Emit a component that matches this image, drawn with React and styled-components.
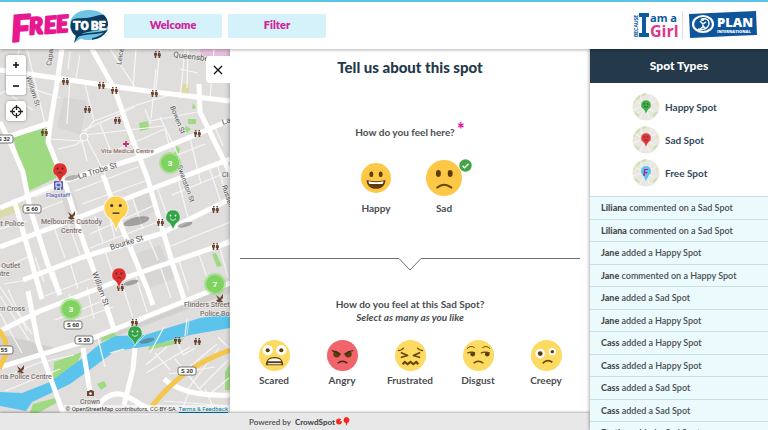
import { useState } from "react";
import styled, { createGlobalStyle } from "styled-components";

const feelings = ["Scared", "Angry", "Frustrated", "Disgust", "Creepy"];

const spotTypes = [
  { label: "Happy Spot", color: "#3fae49", mood: "happy" },
  { label: "Sad Spot", color: "#e0393b", mood: "sad" },
  { label: "Free Spot", color: "#5cc5ee", mood: "free" },
];

const activity = [
  ["Liliana", "commented on a Sad Spot"],
  ["Liliana", "commented on a Sad Spot"],
  ["Jane", "added a Happy Spot"],
  ["Jane", "commented on a Happy Spot"],
  ["Jane", "added a Sad Spot"],
  ["Jane", "added a Happy Spot"],
  ["Cass", "added a Happy Spot"],
  ["Cass", "added a Happy Spot"],
  ["Cass", "added a Sad Spot"],
  ["Cass", "added a Sad Spot"],
  ["Etutlea", "added a Sad Spot"],
];

export default function App() {
  const [mood, setMood] = useState("Sad");

  return (
    <>
      <GlobalStyle />
      <Page>
        <Header>
          <FreeToBeLogo />
          <Nav>
            <NavButton type="button">Welcome</NavButton>
            <NavButton type="button">Filter</NavButton>
          </Nav>
          <Partners>
            <GirlLogo />
            <PlanLogo />
          </Partners>
        </Header>
        <Body>
          <Main>
            <Workspace>
              <MapArea>
                <CityMap />
                <MapControls>
                  <ZoomGroup>
                    <MapButton type="button" aria-label="Zoom in">
                      <svg width="8" height="8" viewBox="0 0 8 8">
                        <path d="M4 1v6M1 4h6" stroke="#111" strokeWidth="1.6" />
                      </svg>
                    </MapButton>
                    <MapButton type="button" aria-label="Zoom out">
                      <svg width="8" height="8" viewBox="0 0 8 8">
                        <path d="M1 4h6" stroke="#111" strokeWidth="1.6" />
                      </svg>
                    </MapButton>
                  </ZoomGroup>
                  <ZoomGroup>
                    <MapButton type="button" aria-label="Find my location">
                      <svg width="13" height="13" viewBox="0 0 13 13" fill="none" stroke="#222" strokeWidth="1.3">
                        <circle cx="6.500" cy="6.500" r="4.300" />
                        <path d="M6.500 0v5M6.500 8v5M0 6.500h5M8 6.500h5" />
                      </svg>
                    </MapButton>
                  </ZoomGroup>
                </MapControls>
                <Attribution>
                  © OpenStreetMap contributors, CC-BY-SA. <a href="#terms">Terms &amp; Feedback</a>
                </Attribution>
              </MapArea>
              <Panel>
                <CloseButton type="button" aria-label="Close">
                  <svg width="10" height="10" viewBox="0 0 10 10">
                    <path d="M1 1l8 8M9 1l-8 8" stroke="#111" strokeWidth="1.3" />
                  </svg>
                </CloseButton>
                <Title>Tell us about this spot</Title>
                <MoodSet>
                  <Question>
                    How do you feel here? <Required>*</Required>
                  </Question>
                  <Options>
                    {["Happy", "Sad"].map((name) => (
                      <Option key={name}>
                        <HiddenInput
                          type="radio"
                          name="mood"
                          checked={mood === name}
                          onChange={() => setMood(name)}
                        />
                        <FaceBox $height={36}>
                          <Face name={name} size={mood === name ? 36 : 30} />
                          {mood === name && <Tick />}
                        </FaceBox>
                        <OptionLabel>{name}</OptionLabel>
                      </Option>
                    ))}
                  </Options>
                </MoodSet>
                <Divider>
                  <Line />
                  <svg width="22" height="13" viewBox="0 0 22 13" fill="none">
                    <path d="M0 .5L11 12 22 .5" stroke="#68707a" />
                  </svg>
                  <Line />
                </Divider>
                <FeelingSet>
                  <SubQuestion>How do you feel at this {mood} Spot?</SubQuestion>
                  <Hint>Select as many as you like</Hint>
                  <Options>
                    {feelings.map((name) => (
                      <Option key={name} $tight>
                        <HiddenInput type="checkbox" name="feeling" value={name} />
                        <FaceBox $height={31}>
                          <Face name={name} size={31} />
                        </FaceBox>
                        <OptionLabel>{name}</OptionLabel>
                      </Option>
                    ))}
                  </Options>
                </FeelingSet>
              </Panel>
            </Workspace>
            <Footer>
              Powered by <strong>CrowdSpot</strong>
              <svg width="14" height="9" viewBox="0 0 14 9" fill="#f5281e">
                <circle cx="3" cy="4.500" r="2.900" />
                <path d="M3 4.500L6 2v2z" fill="#fff" />
                <path d="M10.500 0a3 3 0 0 1 1 5.800l-1 3.200-1-3.200a3 3 0 0 1 1-5.800z" />
              </svg>
            </Footer>
          </Main>
          <Sidebar>
            <SidebarTitle>Spot Types</SidebarTitle>
            <Legend>
              {spotTypes.map((spot) => (
                <LegendItem key={spot.label}>
                  <SpotIcon {...spot} />
                  {spot.label}
                </LegendItem>
              ))}
            </Legend>
            <Activity>
              {activity.map(([name, action], i) => (
                <ActivityRow key={i}>
                  <b>{name}</b> {action}
                </ActivityRow>
              ))}
            </Activity>
          </Sidebar>
        </Body>
      </Page>
    </>
  );
}

function FreeToBeLogo() {
  return (
    <LogoSvg width="98" height="36" viewBox="0 0 98 36" role="img" aria-label="Free to be">
      <g fill="#e8178f" stroke="#e8178f" strokeWidth="2" strokeLinejoin="round" fontFamily="Lato, sans-serif" fontWeight="900" fontStyle="italic" transform="rotate(-4 10 20)">
        <text x="0" y="33" fontSize="36">F</text>
        <text x="18" y="27" fontSize="23">R</text>
        <text x="33" y="27" fontSize="23">E</text>
        <text x="45" y="27" fontSize="23">E</text>
      </g>
      <path d="M78 2c11 0 19 6 19 15s-8 15-19 15c-3 0-6-.5-8-1.500L63 35l2-7c-4-3-6-6-6-11C59 8 67 2 78 2z" fill="#6fc3e4" />
      <path d="M61 12c5-3 13-1 20-3 5-1 9-3 12-2 3 3 4 6 4 10-1 4-4 4-9 5-8 2-15 1-20 6l-5 7 2-7c-5-4-7-10-4-16z" fill="#0d3c5e" />
      <path d="M65 29c8-5 20-2 30-6-3 5-8 7-14 8" fill="none" stroke="#0d3c5e" strokeWidth="1.500" />
      <g fontFamily="Roboto, sans-serif" fontWeight="900" fontSize="12" fill="#fff" stroke="#fff" strokeWidth=".6">
        <text x="62" y="22">TO</text>
        <text x="80" y="22">BE</text>
      </g>
    </LogoSvg>
  );
}

function GirlLogo() {
  return (
    <LogoSvg width="46" height="28" viewBox="0 0 46 28" role="img" aria-label="Because I am a girl">
      <text transform="translate(5 26) rotate(-90)" fontFamily="Lato, sans-serif" fontWeight="900" fontSize="5" fill="#0d5a9e">BECAUSE</text>
      <path d="M6 2h10v4h-3v16h3v4H6v-4h3V6H6z" fill="#0d5a9e" />
      <g fontFamily="Open Sans, sans-serif" fontWeight="700">
        <text x="17" y="11" fontSize="11" fill="#0d5a9e">am a</text>
        <text x="17" y="26" fontSize="16" fill="#e0368c">Girl</text>
      </g>
    </LogoSvg>
  );
}

function PlanLogo() {
  return (
    <LogoSvg width="68" height="28" viewBox="0 0 68 28" role="img" aria-label="Plan International">
      <path d="M0 3l22-1L67 0l1 24-25 1-42 2z" fill="#0f559c" />
      <g fill="none" stroke="#fff">
        <ellipse cx="14" cy="13" rx="10" ry="8" strokeWidth="2.200" />
        <path d="M9 18c5 2 11-1 11-6 0-3-3-5-6-4" strokeWidth="1.400" />
        <path d="M11 10l3 3 3-2M14 12v4l-3 2M14 15l3 3" strokeWidth="1.500" />
      </g>
      <circle cx="13.500" cy="8.500" r="1.600" fill="#fff" />
      <text x="28" y="16" fontFamily="Open Sans, sans-serif" fontWeight="800" fontSize="13" fill="#fff">PLAN</text>
      <text x="28" y="22" fontFamily="Open Sans, sans-serif" fontWeight="800" fontSize="4" fill="#fff">INTERNATIONAL</text>
    </LogoSvg>
  );
}

function Tick() {
  return (
    <TickSvg width="13" height="13" viewBox="0 0 13 13">
      <circle cx="6.500" cy="6.500" r="6.200" fill="#43a547" />
      <path d="M3.500 6.700l2 2 4-4" fill="none" stroke="#fff" strokeWidth="1.500" />
    </TickSvg>
  );
}

const faceDetails = {
  Happy: (
    <>
      <ellipse cx="11" cy="12" rx="2" ry="3" />
      <ellipse cx="21" cy="12" rx="2" ry="3" />
      <path d="M6 18q10 3 20 0c0 6-4 9.500-10 9.500S6 24 6 18z" />
      <path d="M8 19.500q8 2 16 0c0 2-1 3-2 3H10c-1 0-2-1-2-3z" fill="#fff" />
    </>
  ),
  Sad: (
    <>
      <ellipse cx="11" cy="12" rx="2.200" ry="3.100" />
      <ellipse cx="21.500" cy="12" rx="2.200" ry="3.100" />
      <path d="M10 24.500q6-5 12.500 0" fill="none" stroke="#664500" strokeWidth="1.800" strokeLinecap="round" />
    </>
  ),
  Scared: (
    <>
      <circle cx="9" cy="10.500" r="5.300" fill="#fff" />
      <circle cx="23" cy="10.500" r="5.300" fill="#fff" />
      <circle cx="9" cy="10.500" r="2.100" />
      <circle cx="23" cy="10.500" r="2.100" />
      <path d="M7 26c0-5 3-8.500 9-8.500s9 3.500 9 8.500z" />
      <path d="M9 22c1-2 3-3.200 7-3.200s6 1.200 7 3.200z" fill="#fff" />
      <path d="M9 24.500h14" stroke="#fff" strokeWidth="1.200" />
    </>
  ),
  Angry: (
    <>
      <circle cx="10" cy="14.500" r="3.500" />
      <circle cx="22" cy="14.500" r="3.500" />
      <path d="M4 10q6 0 10 5l2-3 2 3q4-5 10-5l-3-3H7z" fill="#f1646b" />
      <path d="M5 11q6 1 9 4M27 11q-6 1-9 4M11 24q5-4 10 0" fill="none" stroke="#412a18" strokeWidth="1.500" />
    </>
  ),
  Frustrated: (
    <g fill="none" stroke="#664500" strokeWidth="1.700" strokeLinejoin="round">
      <path d="M3 11q4 0 6-3M29 11q-4 0-6-3" strokeWidth="1.200" />
      <path d="M6 13l7 3-7 2M26 13l-7 3 7 2" />
      <path d="M8 25l2-2.500 3 2.500 3-2.500 3 2.500 3-2.500 2 2.500" strokeWidth="2.200" />
    </g>
  ),
  Disgust: (
    <>
      <circle cx="10" cy="14.500" r="2.500" />
      <circle cx="25" cy="14.500" r="2.500" />
      <path d="M4 9q4-4 8-1M20 8q4-3 8 1" fill="none" stroke="#664500" strokeWidth="1" />
      <path d="M4.500 13.500q4-2 8 0M18.500 13.500q4-2 9 0M11 24q5-4 10 0" fill="none" stroke="#664500" strokeWidth="1.500" />
    </>
  ),
  Creepy: (
    <>
      <circle cx="9.500" cy="14" r="5" fill="#fff" />
      <circle cx="22" cy="12" r="3.800" fill="#fff" />
      <circle cx="9.500" cy="14" r="2.500" />
      <circle cx="22" cy="12" r="1.800" />
      <path d="M12 24q5-5 10-1" fill="none" stroke="#664500" strokeWidth="1.800" />
    </>
  ),
};

const mainMoods = ["Happy", "Sad"];

function Face({ name, size }) {
  const skin = name === "Angry" ? "#f1646b" : mainMoods.includes(name) ? "#fcc846" : "#fdda61";
  return (
    <svg width={size} height={size} viewBox="0 0 32 32" fill="#5d3c0b">
      <circle cx="16" cy="16" r="16" fill={skin} />
      {faceDetails[name]}
    </svg>
  );
}

function Pin({ x, y, r = 7, color, mood, ink = "#333", shadow = true }) {
  return (
    <g transform={`translate(${x} ${y})`}>
      {shadow && (
        <ellipse cx={r * 1.7} cy={r * 1.1} rx={r * 1.1} ry={r / 3} fill="#555" opacity=".45" transform={`rotate(-14 ${r * 1.7} ${r * 1.1})`} />
      )}
      <g transform={`scale(${r / 7})`}>
        <path d="M0-7a7 7 0 0 1 3.500 13.100C2 8 1 10 0 13-1 10-2 8-3.500 6.100A7 7 0 0 1 0-7z" fill={color} stroke="#fff" strokeWidth=".7" strokeOpacity=".7" />
        <circle cx="-2.500" cy="-1.500" r=".9" fill={ink} />
        <circle cx="2.500" cy="-1.500" r=".9" fill={ink} />
        <path d={{ happy: "M-3 1.500Q0 5 3 1.500", sad: "M-2.500 3.500Q0 1 2.500 3.500", flat: "M-2 3h4" }[mood]} fill="none" stroke={ink} strokeWidth=".8" />
      </g>
    </g>
  );
}

function SpotIcon({ color, mood }) {
  return (
    <svg width="28" height="28" viewBox="0 0 28 28">
      <circle cx="14" cy="14" r="13.500" fill="#e9e7e2" />
      <g stroke="#f7f6f3" fill="none">
        <path d="M3 8l22 12M8 3l10 23M1 17l24-9M20 3L8 25" />
      </g>
      <path d="M4 7l4-4M10 2l4-1M3 20l4 3M21 23l4-4" stroke="#c8e3a6" strokeWidth="2" />
      <path d="M2 11l1-3M24 9l2 3" stroke="#f1dfa8" strokeWidth="2" />
      {mood === "free" ? (
        <>
          <path d="M14 7a5 5 0 0 1 3 9l-3 6-3-6a5 5 0 0 1 3-9z" fill={color} />
          <text x="11" y="17" fontFamily="Lato, sans-serif" fontWeight="900" fontStyle="italic" fontSize="10" fill="#b1268f">F</text>
        </>
      ) : (
        <Pin x={14} y={12} r={5} color={color} mood={mood} shadow={false} />
      )}
    </svg>
  );
}

const majorRoads = [
  "M0 21L63 30 110 37 155 43 230 52",
  "M62 0L56 40 50 76 48 93 67 140 80 183 100 239 115 283",
  "M92 0L115 41 127 76 147 128 173 216 186 256",
  "M0 73L10 93 23 123 30 159 47 213 60 246 M28 242L38 294 63 364",
  "M103 126L122 179 147 239 153 256",
  "M199 35L200 63 230 124",
  "M10 87L50 74",
  "M230 71L200 84 147 106 67 131 0 159",
  "M230 110L143 143 67 173 0 198",
  "M230 150L160 185 83 208 23 231",
  "M230 193L133 226 40 262 0 282",
  "M230 234L133 273 83 293 0 318",
  "M14 150L42 250",
  "M83 299L90 343",
  "M135 299L133 320 124 356",
  "M98 357Q112 338 130 349T155 362",
  "M164 330Q185 348 230 346",
];

const minorRoads = [
  "M160 0L155 49 M156 20L151 70 M0 45L18 35 60 49 M27 0L45 75 M70 2L68 20 M136 0L133 39",
  "M110 0L135 38 M85 35L94 72 85 83 M94 72L140 55 180 43 M82 82L135 58 M50 90L82 92 87 112",
  "M58 100L75 96 82 92 M85 86L105 125 M85 86L163 77 M100 75L112 105 M119 100L165 80 170 100 M145 60L151 75",
  "M185 0L180 50 M214 0L210 50 M197 63L150 72 M160 68L180 110 M205 95L162 112 M190 89L201 135 M215 78L223 97",
  "M180 20L198 24 M188 0L187 39 M80 6L76 30 M19 0L16 20 M8 25L13 48 33 61 M70 30L67 75",
  "M0 180L27 172 M35 148L63 137 M30 165L63 152 M75 142L138 118 M82 155L145 132 M90 185L155 156 M90 199L163 171",
  "M54 178L65 209 M68 174L80 206 M95 167L103 194 M108 161L115 190 M132 147L143 180 M157 138L170 175",
  "M178 130L188 169 M208 115L221 154 M216 112L228 151 M172 146L230 122 M166 199L230 173 M172 214L230 190",
  "M35 208L44 233 M53 218L61 245 M70 213L78 240 M88 207L95 230 M105 202L113 225 M130 191L140 220 M148 188L158 211",
  "M0 220L28 208 M4 235L27 231 M45 247L95 228 M55 271L105 251 M68 274L113 258 M69 245L78 276 M87 238L94 270",
  "M122 235L133 269 M136 228L147 263 M160 217L171 249 M178 209L189 242 M198 203L210 236 M219 195L228 229",
  "M0 238L32 285 M0 247L29 291 M8 240L27 282 M0 264L22 304 M0 330L38 314 M5 342L60 320 M38 314L74 306",
  "M146 316L167 298 M146 324L190 298 M155 304L170 321 M175 288L183 306 195 299 M218 288L229 299 M187 270L185 287",
  "M187 320L217 295 M187 341L219 299 M199 340L228 311 M211 344L229 329 M169 325L215 318 M175 310L202 343 M150 304L164 278",
  "M97 285L105 318 M110 304L124 300 M164 352L230 357 M205 340L216 364 M190 340L181 364",
];

const people = [
  [157, 5], [65, 32], [101, 36], [114, 41], [154, 44], [87, 60], [117, 71], [44, 83],
  [197, 84], [160, 173], [215, 160], [215, 197], [120, 238], [134, 273], [177, 291], [197, 292],
];

const labels = [
  { x: 51, y: 17, turn: -82, text: "Capel", road: true },
  { x: 121, y: 16, turn: -80, text: "Leice", road: true },
  { x: 173, y: 8, turn: 7, text: "Queensberry", road: true, size: 8 },
  { x: 26, y: 28, turn: 72, text: "William St", road: true },
  { x: 170, y: 58, turn: 68, text: "Bowen St", road: true },
  { x: 79, y: 130, turn: -17, text: "La Trobe St", road: true, size: 8 },
  { x: 223, y: 76, turn: -20, text: "La", road: true, size: 8 },
  { x: 177, y: 117, turn: 70, text: "Swanston St", road: true },
  { x: 222, y: 137, turn: 72, text: "Russell", road: true },
  { x: 222, y: 128, text: "CI", road: true },
  { x: 111, y: 201, turn: -17, text: "Bourke St", road: true, size: 8 },
  { x: 92, y: 224, turn: 70, text: "William St", road: true, size: 8 },
  { x: 101, y: 104, text: "Vita Medical Centre", color: "#8c6d65", size: 6 },
  { x: 46, y: 148, text: "Flagstaff", color: "#5f62b8", size: 6 },
  { x: 41, y: 175, text: "Melbourne Custody" },
  { x: 61, y: 184, text: "Centre" },
  { x: -3, y: 177, text: "st Police" },
  { x: -3, y: 219, text: "r Outlet" },
  { x: -3, y: 227, text: "ntre" },
  { x: -5, y: 262, text: "ern Cross" },
  { x: 184, y: 258, text: "Flinders Street" },
  { x: 200, y: 267, text: "Police Box" },
  { x: -6, y: 330, text: "toria Police Centre" },
  { x: 80, y: 355, text: "Crown" },
];

const shields = [
  [4, 90, "S 32"], [32, 160, "S 60"], [73, 276, "S 60"], [84, 291, "S 30"], [4, 301, "55"], [187, 322, "S 20"],
];

const clusters = [
  [170, 114, 3], [215, 235, 7], [71, 260, 3],
];

function CityMap() {
  return (
    <MapSvg viewBox="0 0 230 364" preserveAspectRatio="xMidYMid slice" role="img" aria-label="Map of central Melbourne">
      <rect width="230" height="364" fill="#e0dedd" />
      <g fill="#d8d6d4">
        <path d="M64 48l23 4-6 34-24-8zM133 147l20-7 6 20-18 9zM59 143l12-4 8 22-12 5zM136 205l24-9 15 33-25 10z" />
      </g>
      <path d="M0 285l60 15 60-14 110-42v-8L130 278 60 304 0 320z" fill="#d2d0ce" />
      <g fill="#9fda83">
        <path d="M13 88l32-9 5 21 10 27-31 15-7-19z" />
        <path d="M139 74l9-2 1 8-9 2zM188 70l8 0v5h-8zM186 77l5 3-4 4-3-4zM193 54l3 5-4 1zM176 97l4 2-4 16-3 0zM212 205l4-1 6 13-5 1zM54 313l28-10-5 12-24 16zM102 288l11-5 4 4-16 6zM150 296l34-7-4 5-32 7zM97 335l7-3 3 5-6 4zM33 355l22-6 3 4-20 11H30zM225 323l5-8v26h-5z" />
      </g>
      <path d="M181 35h8v11h-8zM128 78l4-2-2 14-3 2zM0 160l24-5-6 8-18 6z" fill="#dbdba7" />
      <path d="M200 0h31v7h-30z" fill="#e7bddc" />
      <path d="M0 343L22 344 50 333 80 311 100 295 115 287 145 286 200 269 230 264V279L190 286 150 297 115 302 95 317 70 335 32 353 26 362 0 357z" fill="#5cc3ec" />
      <g fill="none" stroke="#f7f6f5" strokeWidth="1.200">
        {minorRoads.map((d) => <path key={d} d={d} />)}
      </g>
      <g fill="none" stroke="#fff" strokeWidth="5" strokeLinejoin="round">
        {majorRoads.map((d) => <path key={d} d={d} />)}
      </g>
      <circle cx="84" cy="88" r="4" fill="#dfdddc" stroke="#fff" />
      <path d="M230 301Q205 310 187 323T152 357M-1 281Q8 292 6 305L-1 320" fill="none" stroke="#f4c64b" strokeWidth="5" />
      <path d="M133 298l13-13M187 286l2-14" stroke="#bfe2ee" strokeWidth="1" />
      <g fill="#6d4633">
        {people.map(([x, y]) => (
          <path key={`${x}-${y}`} transform={`translate(${x - 3} ${y - 3})`} d="M1 0h1.500v1.500H1zM0 2h3v2.500h-.7V7H.7V4.500H0zM4.500 0H6v1.500H4.500zM4 2h2.500L7 5h-.8v2H4.500V5h-.8z" />
        ))}
        <path d="M68 163l4 3 3-4v4l-2 2 2 2-4 1-3-2 2-2zM17 317l4 3 3-4v4l-2 2 2 2-4 1-3-2 2-2zM216 246l4 3 3-4v4l-2 2 2 2-4 1-3-2 2-2z" />
        <path d="M87 342h2l1-1h2l1 1h1v5h-7z" />
      </g>
      <circle cx="90.500" cy="344.500" r="1.200" fill="#fff" />
      <path d="M126 92v6M123 95h6" stroke="#c0347e" strokeWidth="1.800" />
      <rect x="54" y="132" width="9" height="9" rx="1" fill="#5960b8" />
      <path d="M56 134h5v4h-5zM57 139l-1 2M60 139l1 2" fill="none" stroke="#fff" />
      {labels.map((label) => (
        <text
          key={label.text + label.y}
          transform={`translate(${label.x} ${label.y}) rotate(${label.turn || 0})`}
          fontSize={label.size || 7}
          fontWeight={label.road ? 400 : 500}
          fill={label.color || (label.road ? "#555" : "#7d726c")}
          stroke="#f2f0ef"
          strokeWidth="1.400"
          strokeOpacity=".7"
          paintOrder="stroke"
        >
          {label.text}
        </text>
      ))}
      {shields.map(([x, y, text]) => (
        <g key={`${x}-${y}`}>
          <rect x={x - 9} y={y - 4} width="18" height="8" rx="2" fill="#fff" stroke="#555" strokeWidth=".8" />
          <text x={x} y={y + 2} fontSize="6" fontWeight="700" textAnchor="middle" fill="#333">{text}</text>
        </g>
      ))}
      {clusters.map(([x, y, count]) => (
        <g key={`${x}-${y}`}>
          <circle cx={x} cy={y} r="11" fill="#8fdc73" opacity=".6" />
          <circle cx={x} cy={y} r="9" fill="#7fd35f" />
          <text x={x} y={y + 3} fontSize="8" fontWeight="700" textAnchor="middle" fill="#fff">{count}</text>
        </g>
      ))}
      <Pin x={60} y={121} color="#e0302f" mood="sad" />
      <Pin x={116} y={159} r={12} color="#fdcf4c" mood="flat" />
      <Pin x={173} y={168} color="#33a548" mood="happy" ink="#fff" />
      <Pin x={119} y={226} color="#e0302f" mood="sad" />
      <Pin x={135} y={284} color="#33a548" mood="happy" ink="#fff" />
    </MapSvg>
  );
}

const GlobalStyle = createGlobalStyle`
  * {
    box-sizing: border-box;
  }

  body {
    margin: 0;
    font-family: Lato, "Liberation Sans", sans-serif;
    color: #4a4d50;
    background: #fff;
  }

  button {
    font-family: inherit;
    border: 0;
    cursor: pointer;
  }

  h1, h2, p, ul, fieldset {
    margin: 0;
    padding: 0;
    border: 0;
  }
`;

const Page = styled.div`
  display: flex;
  flex-direction: column;
  height: 100vh;
  overflow: hidden;
`;

const Header = styled.header`
  position: relative;
  z-index: 3;
  display: flex;
  align-items: center;
  gap: 15px;
  height: 49px;
  flex: none;
  padding: 0 11px;
  border-top: 2px solid #5bc4e4;
  background: #fff;
  box-shadow: 0 1px 3px rgba(0, 0, 0, 0.3);
`;

const LogoSvg = styled.svg`
  flex: none;
  display: block;
  overflow: visible;
`;

const Nav = styled.nav`
  display: flex;
  gap: 6px;
`;

const NavButton = styled.button`
  width: 98px;
  height: 24px;
  padding: 0 0 2px;
  border-radius: 1px;
  background: #d5f1f9;
  color: #d4229b;
  font-size: 11px;
  font-weight: 800;
`;

const Partners = styled.div`
  display: flex;
  align-items: center;
  margin-left: auto;
  padding-bottom: 2px;

  svg + svg {
    margin-left: 3px;
    padding-left: 6px;
    border-left: 1px solid #dcdcdc;
    width: 75px;
  }
`;

const Body = styled.div`
  display: flex;
  flex: 1;
  min-height: 0;
`;

const Main = styled.main`
  display: flex;
  flex-direction: column;
  flex: 1;
  min-width: 0;
`;

const Workspace = styled.div`
  display: flex;
  flex: 1;
  min-height: 0;
`;

const MapArea = styled.section`
  position: relative;
  flex: 1;
  min-width: 0;
  overflow: hidden;
`;

const MapSvg = styled.svg`
  display: block;
  width: 100%;
  height: 100%;
  font-family: Roboto, sans-serif;
`;

const MapControls = styled.div`
  position: absolute;
  top: 6px;
  left: 6px;
  display: grid;
  gap: 6px;
`;

const ZoomGroup = styled.div`
  border-radius: 3px;
  background: #fff;
  box-shadow: 0 0 3px rgba(0, 0, 0, 0.4);
`;

const MapButton = styled.button`
  display: grid;
  place-items: center;
  width: 20px;
  height: 20px;
  padding: 0;
  background: none;

  & + & {
    border-top: 1px solid #ccc;
  }
`;

const Attribution = styled.p`
  position: absolute;
  right: 0;
  bottom: 0;
  padding: 0 2px;
  background: rgba(255, 255, 255, 0.6);
  color: #333;
  font: 6px/8px Roboto, sans-serif;
  white-space: nowrap;

  a {
    color: #0078a8;
  }
`;

const Panel = styled.section`
  position: relative;
  z-index: 1;
  width: 360px;
  flex: none;
  padding: 9px 10px 0;
  background: #fff;
  text-align: center;
  box-shadow: -1px 0 4px rgba(0, 0, 0, 0.25);
`;

const CloseButton = styled.button`
  position: absolute;
  top: 7px;
  left: -24px;
  display: grid;
  place-items: center;
  width: 24px;
  height: 27px;
  padding: 0;
  border-radius: 4px 0 0 4px;
  background: #fff;
`;

const Title = styled.h1`
  color: #24394a;
  font-size: 15px;
  font-weight: 900;
  line-height: 18px;
`;

const MoodSet = styled.fieldset`
  margin-top: 48px;
`;

const Question = styled.h2`
  margin-bottom: 20px;
  font-size: 10px;
  font-weight: 700;
  line-height: 16px;
`;

const Required = styled.span`
  color: #e0159a;
  font-size: 18px;
  font-weight: 900;
  line-height: 1px;
`;

const Options = styled.div`
  display: flex;
  justify-content: center;
`;

const Option = styled.label`
  position: relative;
  display: grid;
  justify-items: center;
  gap: ${({ $tight }) => ($tight ? "1px" : "4px")};
  width: 68px;
  cursor: pointer;
`;

const HiddenInput = styled.input`
  position: absolute;
  opacity: 0;
  margin: 0;
`;

const FaceBox = styled.span`
  position: relative;
  display: flex;
  align-items: center;
  height: ${({ $height }) => $height}px;
`;

const TickSvg = styled.svg`
  position: absolute;
  top: -1px;
  right: -10px;
`;

const OptionLabel = styled.span`
  font-size: 10px;
  font-weight: 700;
  line-height: 16px;
`;

const Divider = styled.div`
  display: flex;
  margin-top: 42px;

  svg {
    flex: none;
  }
`;

const Line = styled.span`
  flex: 1;
  height: 1px;
  background: #68707a;
  box-shadow: 0 2px 2px -1px rgba(0, 0, 0, 0.3);
`;

const FeelingSet = styled.fieldset`
  margin-top: 27px;
`;

const SubQuestion = styled.h2`
  font-size: 10px;
  font-weight: 700;
  line-height: 13px;
`;

const Hint = styled.p`
  margin-bottom: 16px;
  font-size: 10px;
  font-style: italic;
  font-weight: 700;
  line-height: 13px;
`;

const Footer = styled.footer`
  position: relative;
  z-index: 2;
  display: flex;
  align-items: center;
  gap: 4px;
  height: 17px;
  flex: none;
  padding-left: 249px;
  background: #e8e8e8;
  font-size: 8px;
  font-weight: 600;
  box-shadow: 0 -1px 2px rgba(0, 0, 0, 0.3);

  svg {
    margin-left: -3px;
  }
`;

const Sidebar = styled.aside`
  position: relative;
  z-index: 2;
  width: 178px;
  flex: none;
  overflow: hidden;
  background: #fff;
  box-shadow: -1px 0 3px rgba(0, 0, 0, 0.3);
`;

const SidebarTitle = styled.h2`
  background: #24394a;
  color: #fff;
  font-size: 12px;
  font-weight: 900;
  line-height: 34px;
  text-align: center;
`;

const Legend = styled.ul`
  display: grid;
  gap: 5px;
  padding: 10px 0 9px 42px;
  list-style: none;
`;

const LegendItem = styled.li`
  display: flex;
  align-items: center;
  gap: 5px;
  color: #33475a;
  font-size: 10px;
  font-weight: 700;
`;

const Activity = styled.ul`
  list-style: none;
`;

const ActivityRow = styled.li`
  height: 22px;
  padding-left: 11px;
  border-top: 1px solid #cbdfe3;
  background: #eafafd;
  font-size: 9px;
  font-weight: 600;
  line-height: 21px;
  white-space: nowrap;

  &:nth-child(odd) {
    height: 23px;
  }

  b {
    font-weight: 900;
  }
`;
